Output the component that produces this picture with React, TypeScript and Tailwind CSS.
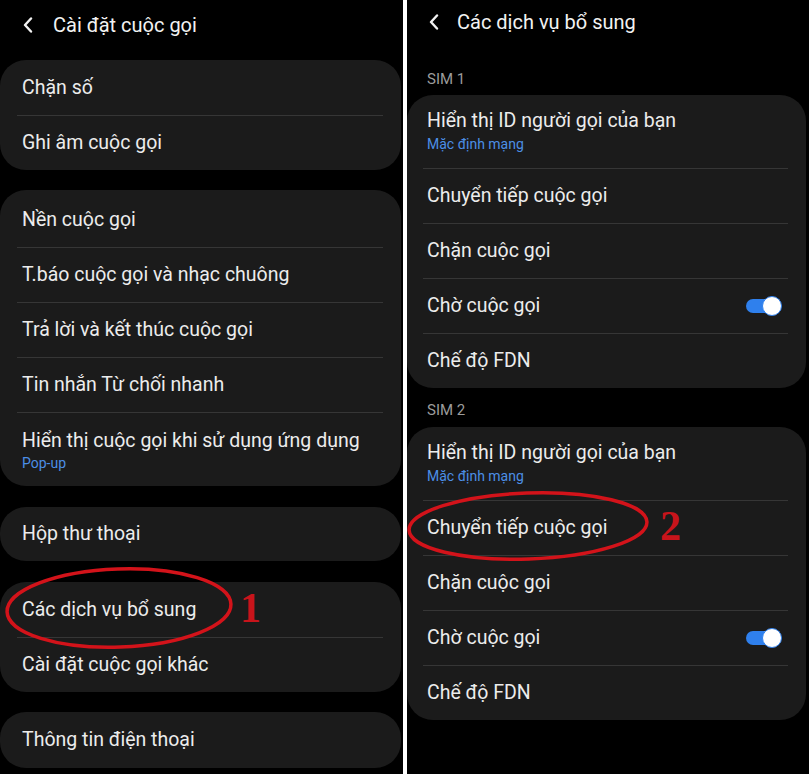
type Row = { title: string; sub?: string; toggle?: boolean }

function Chevron() {
  return (
    <svg width="10" height="16" viewBox="0 0 10 16" className="shrink-0">
      <polyline points="8,1.5 2,8 8,14.5" fill="none" stroke="#f2f2f2" strokeWidth="2.4" strokeLinecap="round" strokeLinejoin="round" />
    </svg>
  )
}

function Toggle() {
  return (
    <div className="relative w-[36px] h-[20px] shrink-0">
      <div className="absolute left-0 top-[3px] w-[30px] h-[14px] rounded-full bg-[#2f80ed]" />
      <div className="absolute right-0 top-0 w-[20px] h-[20px] rounded-full bg-white border-[1.5px] border-[#2f80ed]" />
    </div>
  )
}

function Card({ rows, side, className = "" }: { rows: Row[]; side: "left" | "right"; className?: string }) {
  const pad = side === "left" ? "pl-[22px] pr-[20px]" : "pl-[20px] pr-[24px]"
  const div = side === "left" ? "ml-[17px] mr-[18px]" : "ml-[16px] mr-[18px]"
  return (
    <div className={`bg-[#1b1b1b] rounded-[26px] flex flex-col ${className}`}>
      {rows.map((r, i) => (
        <div key={i} className="flex flex-col">
          {i > 0 && <div className={`h-px bg-[#363636] ${div}`} />}
          {r.sub ? (
            <div className={`flex flex-col ${pad} ${side === "left" ? "pt-[17px] pb-[14px] gap-[3px]" : "pt-[15px] pb-[15px] gap-[4px]"}`}>
              <div className="text-[19.5px] leading-[22px] text-[#ececec]">{r.title}</div>
              <div className="text-[14px] leading-[17px] text-[#4c8fe6]">{r.sub}</div>
            </div>
          ) : (
            <div className={`h-[54px] flex items-center justify-between ${pad}`}>
              <span className="text-[19.5px] leading-[22px] text-[#ececec]">{r.title}</span>
              {r.toggle && <Toggle />}
            </div>
          )}
        </div>
      ))}
    </div>
  )
}

const sim: Row[] = [
  { title: "Hiển thị ID người gọi của bạn", sub: "Mặc định mạng" },
  { title: "Chuyển tiếp cuộc gọi" },
  { title: "Chặn cuộc gọi" },
  { title: "Chờ cuộc gọi", toggle: true },
  { title: "Chế độ FDN" },
]

export default function App() {
  return (
    <div className="relative w-[809px] h-[774px] bg-white flex gap-[4px] overflow-hidden font-[Roboto,sans-serif]">
      <div className="w-[403px] h-full bg-black flex flex-col pr-[2px]">
        <div className="h-[50px] flex items-center pl-[23px] gap-[20px]">
          <Chevron />
          <span className="text-[20px] text-[#f2f2f2]">Cài đặt cuộc gọi</span>
        </div>
        <Card side="left" className="mt-[10px] h-[110px] pt-[1px]" rows={[{ title: "Chặn số" }, { title: "Ghi âm cuộc gọi" }]} />
        <Card
          side="left"
          className="mt-[20px] h-[296px] pt-[3px]"
          rows={[
            { title: "Nền cuộc gọi" },
            { title: "T.báo cuộc gọi và nhạc chuông" },
            { title: "Trả lời và kết thúc cuộc gọi" },
            { title: "Tin nhắn Từ chối nhanh" },
            { title: "Hiển thị cuộc gọi khi sử dụng ứng dụng", sub: "Pop-up" },
          ]}
        />
        <Card side="left" className="mt-[21px] h-[54px]" rows={[{ title: "Hộp thư thoại" }]} />
        <Card side="left" className="mt-[21px] h-[110px] pt-[1px]" rows={[{ title: "Các dịch vụ bổ sung" }, { title: "Cài đặt cuộc gọi khác" }]} />
        <Card side="left" className="mt-[20px] h-[56px] justify-center" rows={[{ title: "Thông tin điện thoại" }]} />
      </div>

      <div className="flex-1 h-full bg-black flex flex-col pr-[3px]">
        <div className="h-[44px] flex items-center pl-[22px] gap-[18px]">
          <Chevron />
          <span className="text-[20px] text-[#f2f2f2]">Các dịch vụ bổ sung</span>
        </div>
        <div className="h-[51px] flex items-end pb-[7px] pl-[20px] text-[15px] leading-[17px] text-[#9c9c9c]">SIM 1</div>
        <Card side="right" rows={sim} />
        <div className="h-[39px] flex items-end pb-[8px] pl-[20px] text-[15px] leading-[17px] text-[#9c9c9c]">SIM 2</div>
        <Card side="right" rows={sim} />
      </div>

      <svg className="absolute inset-0 pointer-events-none" width="809" height="774">
        <ellipse cx="119" cy="608" rx="112" ry="39" fill="none" stroke="#d3131a" strokeWidth="3.5" transform="rotate(-2 119 608)" />
        <ellipse cx="528" cy="526" rx="119" ry="33" fill="none" stroke="#d3131a" strokeWidth="3.5" transform="rotate(-2 528 526)" />
      </svg>
      <span className="absolute left-[240px] top-[584px] text-[42px] leading-[48px] font-bold text-[#c8141b] font-['Liberation_Serif',serif]">1</span>
      <span className="absolute left-[660px] top-[502px] text-[42px] leading-[48px] font-bold text-[#c8141b] font-['Liberation_Serif',serif]">2</span>
    </div>
  )
}
